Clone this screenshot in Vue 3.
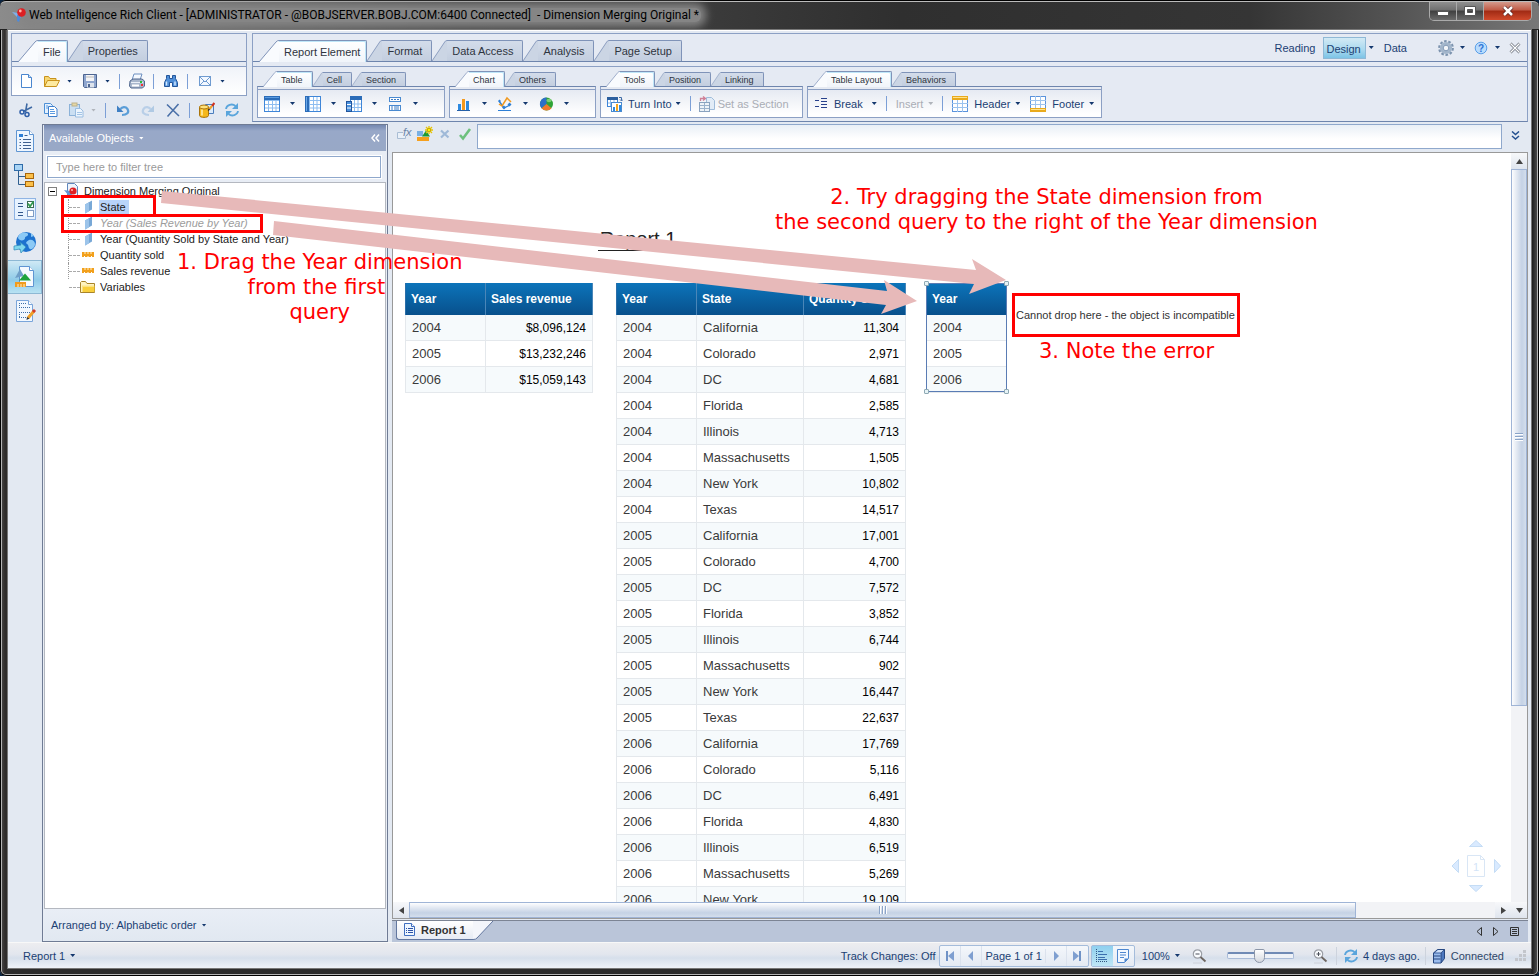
<script setup>
import { h } from 'vue'

const grid = (a) => `<rect x="0.5" y="0.5" width="15" height="15" fill="#fff" stroke="#3f86d8"/><path d="M4.5 1v14M8.5 1v14M12 1v14M1 4.5h14M1 8.5h14M1 12h14" stroke="#8dbdf0" fill="none"/>${a}`
const page = '<path d="M2.5 0.5h8l3 3v12h-11z" fill="#eef6ff" stroke="#4a86cf"/><path d="M10.5 0.5v3h3" fill="#fff" stroke="#4a86cf"/>'
const refresh = '<path d="M2 7c.5-4 6-6 9.500-3" fill="none" stroke="#5aa5dc" stroke-width="1.800"/><path d="M14 1v6H8z" fill="#5aa5dc"/><path d="M14 9c-.5 4-6 6-9.500 3" fill="none" stroke="#5aa5dc" stroke-width="1.800"/><path d="M2 15v-6h6z" fill="#5aa5dc"/>'

const icons = {
  logo: '<path d="M1 5l6 1 3 4-2 2-3-3z" fill="#7fb0ea"/><path d="M6 8l4 1-2 6-2-1z" fill="#4f8ad8"/><circle cx="10.500" cy="5.500" r="4.300" fill="#dc1f22"/><circle cx="9.300" cy="4" r="1.400" fill="#ffb0a8"/>',
  new: '<path d="M2.500 1.500h7l3 3v10h-10z" fill="#fff" stroke="#4a86cf"/><path d="M9.500 1.500v3h3" fill="#d4e6fa" stroke="#4a86cf"/>',
  open: '<path d="M.5 13.500v-10h4l1.500 2h6v2" fill="#f6d671" stroke="#c8921c"/><path d="M.5 13.500l3-6h12l-3 6z" fill="#fdeaa0" stroke="#c8921c"/>',
  save: '<path d="M1.500 1.500h13v13h-12l-1-1z" fill="#8fa6cf" stroke="#4d6591"/><rect x="4" y="2" width="8" height="6" fill="#f4f4f6"/><path d="M4 4h8" stroke="#bbb"/><rect x="5" y="10" width="7" height="4.500" fill="#dde3ec"/><rect x="6" y="11" width="2" height="3" fill="#4d6591"/>',
  print: '<path d="M5 1l8 0-2 6H3z" fill="#f5f9ff" stroke="#6c8fc0"/><path d="M1 8l3-2h9l2.500 2v5l-2 2H2l-1.500-2z" fill="#a9b7cc" stroke="#51678e"/><path d="M2 9.500h12" stroke="#e9eef6"/><rect x="3" y="11.500" width="7" height="2" fill="#fff"/><rect x="11" y="8" width="2" height="2" fill="#2bbd38"/><rect x="12" y="11" width="2" height="2" fill="#e33"/>',
  find: '<path d="M3.500 2.500h3v3h3v-3h3v3l2 4v4h-5v-4H6.500v4h-5v-4l2-4z" fill="#4f8fd8" stroke="#22559b"/><path d="M3.500 8.500v4M12 8.500v4" stroke="#cfe6ff" stroke-width="1.500"/>',
  mail: '<rect x="2.500" y="3.500" width="11" height="9" fill="#f3f8ff" stroke="#6f9bd0"/><path d="M3 4l5 5 5-5M3 12l4-4M13 12l-4-4" fill="none" stroke="#6f9bd0"/>',
  cut: '<path d="M9 1.500L7.500 10M14 5L5 9.500" stroke="#3f6aa5" stroke-width="1.600" fill="none"/><circle cx="4" cy="10" r="2" fill="none" stroke="#2f5fa8" stroke-width="1.500"/><circle cx="9" cy="12.500" r="2" fill="none" stroke="#2f5fa8" stroke-width="1.500"/>',
  copy: '<path d="M1.500 1.500h6l2 2v8h-8z" fill="#e4f1ff" stroke="#4d90d6"/><path d="M5.500 4.500h6l2.500 2.500v7.500h-8.500z" fill="#fff" stroke="#3f7ecb"/><path d="M7 7.500h4M7 9.500h5M7 11.500h5M3 4h2M3 6h2" stroke="#5b9ae0"/>',
  paste: '<rect x="1.500" y="2.500" width="10" height="11" fill="#cbdff2" stroke="#8cb2d8"/><rect x="4" y="1" width="5" height="3" fill="#e5d7a5" stroke="#bdb28a"/><path d="M7.500 6.500h5l2.500 2.500v6h-7.500z" fill="#edf5fd" stroke="#9bbde0"/><path d="M9 10.500h5M9 12.500h5" stroke="#a3c4e6"/>',
  undo: '<path d="M7 13c5 0 7.500-2.500 5.500-6C10.500 4.200 7 5 5.500 7" fill="none" stroke="#5b9ed8" stroke-width="2.200"/><path d="M2 3.500v6.500h6.500z" fill="#3f80c4"/>',
  redo: '<path d="M9 13c-5 0-7.500-2.500-5.500-6C5.500 4.200 9 5 10.500 7" fill="none" stroke="#b9cfe8" stroke-width="2.200"/><path d="M14 3.500v6.500H7.500z" fill="#b0cae4"/>',
  del: '<path d="M2 2.500l12 11.500M13.500 2L2.500 14.500" stroke="#4a70a8" stroke-width="1.600"/>',
  editdata: '<path d="M6.500 2.500h8v9h-8z" fill="#dcebfb" stroke="#4b7dbd"/><path d="M.5 5v8.500c0 2.500 9 2.500 9 0V5z" fill="#f5b81c" stroke="#a9730a"/><ellipse cx="5" cy="5" rx="4.500" ry="2" fill="#ffe27a" stroke="#a9730a"/><path d="M3 7.500v6" stroke="#fff2b5" stroke-width="1.500"/><path d="M15.500 1L13 4" stroke="#d0321e" stroke-width="2.200"/><path d="M13 4L10 7.500" stroke="#f0a028" stroke-width="2.200"/><path d="M10.500 7L9 8.500" stroke="#333" stroke-width="1.500"/>',
  refresh,
  tbl: grid('<rect x="0" y="0" width="16" height="4" fill="#2b6cb8"/><path d="M1 1.500h14" stroke="#5a9be0"/>'),
  tblv: grid('<rect x="0" y="0" width="4" height="16" fill="#2b6cb8"/><path d="M1.500 1v14" stroke="#6aa8e8"/>'),
  tblx: '<rect x="4.500" y=".5" width="11" height="15" fill="#fff" stroke="#3f86d8"/><path d="M8.500 4v11M12 4v11M5 8h10M5 11.500h10" stroke="#8dbdf0"/><rect x="4" y="0" width="12" height="4" fill="#2b6cb8"/><rect x=".5" y="5.500" width="5" height="10" fill="#4b92de" stroke="#22559b"/><path d="M1 8.500h4M1 12h4" stroke="#fff"/>',
  form: '<rect x="2.500" y="1.500" width="11" height="4" fill="#fff" stroke="#4a8ad0"/><rect x="2.500" y="9.500" width="11" height="5" fill="#fff" stroke="#4a8ad0"/><path d="M4 3.500h2M7 3.500h2M10 3.500h2M4 11h2M7 11h5M4 13h2M7 13h5" stroke="#3d7cc4"/>',
  bar: '<rect x="2" y="8" width="3" height="6" fill="#2d8ae0"/><rect x="6" y="3" width="3" height="11" fill="#f39a1f"/><rect x="10" y="5" width="3" height="9" fill="#2d8ae0"/><path d="M1 14.500h13" stroke="#2560a8"/>',
  line: '<path d="M2 5l5 7 6-3" fill="none" stroke="#2d7fd6" stroke-width="1.300"/><path d="M2 8l3 2 5-8 4 4" fill="none" stroke="#f0981e" stroke-width="1.500"/><path d="M1 14.500h13" stroke="#2d7fd6"/><path d="M7 9.500l2 2-2 2-2-2zM12.500 6.500l2 2-2 2-2-2zM2.500 3.500l1.500 1.500-1.500 1.500L1 5z" fill="#2d7fd6"/>',
  pie: '<circle cx="8.500" cy="8" r="6.500" fill="#2fa336"/><path d="M8.500 8V1.500A6.500 6.500 0 0 0 3.500 12.200z" fill="#2c6fc8"/><path d="M8.500 8L3.500 12.200A6.500 6.500 0 0 0 13.500 12.200z" fill="#f0792c"/><ellipse cx="11" cy="4.500" rx="2.500" ry="1.700" fill="#9de08f" opacity=".7"/>',
  turn: '<rect x=".5" y="1.500" width="10" height="9" fill="#fff" stroke="#3f86d8"/><rect x="0" y="1" width="11" height="3" fill="#2b5f9f"/><path d="M3.500 4v6M7 4v6M1 7h9" stroke="#8dbdf0"/><rect x="4.500" y="6.500" width="10" height="9" fill="#fff" stroke="#4a8ad0"/><path d="M12 1.500h2.500v3M13 3.500l1.500 1.500L16 3.500" fill="none" stroke="#3f6aa5"/><rect x="6" y="11" width="2" height="4" fill="#2d8ae0"/><rect x="9" y="8" width="2" height="7" fill="#f3a51f"/><rect x="12" y="9" width="2" height="6" fill="#2d8ae0"/>',
  setsec: '<path d="M7.500 1.500h5l3 3v9h-8z" fill="#e2ecf7" stroke="#9fbcda"/><rect x=".5" y="6.500" width="10" height="9" fill="#eef3f8" stroke="#8aa3bf"/><path d="M1 9.500h9M1 12.500h9M5.500 7v8" stroke="#9ab2cc"/><path d="M1.500 5V2.500h4M4 .5l2.500 2L4 4.500" fill="none" stroke="#cf7f96" stroke-width="1.300"/>',
  brk: '<path d="M1 4.500h4M1 10.500h4M7 2.500h6M7 5.500h6M7 8.500h6M7 11.500h6" stroke="#27408b"/>',
  header: '<rect x=".5" y=".5" width="15" height="15" fill="#fff" stroke="#5b93dc"/><path d="M5.500 4v12M10.500 4v12M0 7.500h16M0 11.500h16" stroke="#9cc3ee"/><rect x="0" y="0" width="16" height="4" fill="#e9aa1c"/><path d="M1 1.500h14" stroke="#ffe28a"/>',
  footer: '<rect x=".5" y=".5" width="15" height="15" fill="#fff" stroke="#5b93dc"/><path d="M5.500 0v12M10.500 0v12M0 4.500h16M0 8.500h16" stroke="#9cc3ee"/><rect x="0" y="12" width="16" height="4" fill="#e9aa1c"/><path d="M1 13.500h14" stroke="#ffe28a"/>',
  gear: '<circle cx="8" cy="8" r="6.800" fill="none" stroke="#7c93ae" stroke-width="2.200" stroke-dasharray="2.600 1.670"/><circle cx="8" cy="8" r="4.600" fill="#e4ebf3" stroke="#a3b6cb" stroke-width="3"/><circle cx="8" cy="8" r="2.800" fill="#f2f5f9" stroke="#7f97b4"/>',
  help: '<circle cx="8" cy="8" r="5.800" fill="#b9dcfd" stroke="#5a9fe8"/><text x="8" y="12" text-anchor="middle" font-size="10" font-weight="bold" fill="#2f74d4">?</text>',
  close: '<path d="M3.500 3.500l9 9M12.500 3.500l-9 9" stroke="#5d6470" stroke-width="2.600"/><path d="M3.500 3.500l9 9M12.500 3.500l-9 9" stroke="#fff" stroke-width="1.400"/>',
  fx: '<path d="M6 6.500H.5v6h8V10" fill="#e9f0f8" stroke="#a9bdd4"/><text x="6" y="10" font-size="11" font-style="italic" fill="#6883a8">fx</text>',
  shape: '<rect x="0" y="5" width="6" height="5" fill="#79b0e4"/><path d="M5 10.500l4-6 4 6z" fill="#1c9a35"/><rect x="0" y="11" width="12" height="4" fill="#f6a01e"/><path d="M12 0v8M8 4h8M9 1l6 6M15 1L9 7" stroke="#e8c400" stroke-width="1.300"/><circle cx="12" cy="4" r="1.700" fill="#fff200" stroke="#b08a00" stroke-width=".6"/>',
  x: '<path d="M4 4.500l7.500 7M11.500 4.500l-7.500 7" stroke="#9fb9d8" stroke-width="2.200"/>',
  check: '<path d="M3 9l3 3.500L13 3" fill="none" stroke="#6dc07d" stroke-width="2.600"/>',
  db: '<path d="M2.500 5l4-3.500h7v9L10 15H2.500z" fill="#4c78bf" stroke="#27477f"/><path d="M2.500 5h7.500l3.500-3.500M10 5v10" fill="none" stroke="#27477f"/><path d="M3 5.500h6.500v9H3z" fill="#9bbcec"/><path d="M3 8h6.500M3 11h6.500" stroke="#27477f"/><path d="M4 4.500l3-2.500h5.500L10 4.500z" fill="#cfe0f8"/>',
  zout: '<circle cx="6.500" cy="6" r="4.200" fill="#fafcff" stroke="#9b9fa6" stroke-width="1.200"/><path d="M4.500 6h4" stroke="#4a4f58"/><path d="M9.500 9l5 4.500" stroke="#6d6560" stroke-width="1.800"/><path d="M2 15h9" stroke="#ccd0d8"/>',
  zin: '<circle cx="6.500" cy="6" r="4.200" fill="#fafcff" stroke="#9b9fa6" stroke-width="1.200"/><path d="M4.500 6h4M6.500 4v4" stroke="#4a4f58"/><path d="M9.500 9l5 4.500" stroke="#6d6560" stroke-width="1.800"/><path d="M2 15h9" stroke="#ccd0d8"/>',
  doc: '<path d="M3.500 1.500h7l3 3v9h-10z" fill="#eef6ff" stroke="#3f6fc0"/><path d="M10.500 1.500v3h3" fill="#fff" stroke="#3f6fc0"/><path d="M5 6.500h1M7 6.500h5M5 8.500h1M7 8.500h5M5 10.500h1M7 10.500h5" stroke="#2c52a5"/>',
  cube: '<path d="M5 5.500l7-4v9l-7 4z" fill="#78a8d6"/><path d="M5 5.500l4-2.300v9l-4 2.300z" fill="#9cc4ea"/>',
  measure: '<path d="M2 5h12v5h-2V9h-1v1H8.500V9h-1v1H5V9H4v1H2z" fill="#f2a01c"/><path d="M5 5v2M8 5v2M11 5v2" stroke="#fff0c8"/>',
  folder: '<path d="M.5 13.500v-10l1-1h4l1.500 2h7.500v9z" fill="#fff3c0" stroke="#a8842a"/><path d="M2.500 13V6.500h12v6.500z" fill="#f9cf3c"/><path d="M3 7h11" stroke="#fff6c8"/>',
  root: '<path d="M3.500.5h7l3 3v9h-10z" fill="#eef4fc" stroke="#5f86bd"/><path d="M0 7l6 1 2 4-3 1z" fill="#5f95d6"/><circle cx="9" cy="8" r="3.600" fill="#dd2024"/><circle cx="8" cy="7" r="1.100" fill="#ffb0a8"/><path d="M6 14.500h7" stroke="#9ab0cc"/>',
}

const rail = [
  { label: 'Document Summary', art: '<path d="M3.500 1.500h13l4 4v17h-17z" fill="#eef6ff" stroke="#5f95d2"/><path d="M16.500 1.500v4h4" fill="#fff" stroke="#5f95d2"/><rect x="6" y="5" width="4" height="3" fill="#2d7fd6"/><path d="M11.500 6.500h3M10 10.500h8M10 13.500h8M10 16.500h8M10 19.500h8M6.500 10.500h1.500M6.500 13.500h1.500M6.500 16.500h1.500M6.500 19.500h1.500" stroke="#40618f"/>' },
  { label: 'Navigation Map', art: '<path d="M5.500 8v13.500h8M5.500 13.500h8" fill="none" stroke="#2f5f90"/><rect x="1.500" y="1.500" width="8" height="6" fill="#a9d4f5" stroke="#2f6ba8"/><rect x="12.500" y="10.500" width="8" height="5" fill="#fbc04a" stroke="#a8660b"/><rect x="12.500" y="18.500" width="8" height="5" fill="#fbc04a" stroke="#a8660b"/>' },
  { label: 'Input Controls', art: '<rect x="1.500" y="1.500" width="21" height="21" fill="#e6f2ff" stroke="#8fb4e4"/><path d="M5 6.500h5M5 9.500h5M5 15.500h5M5 18.500h5" stroke="#31568a"/><rect x="14.500" y="4.500" width="6" height="6" fill="#fff" stroke="#3c6a55"/><path d="M15 6.500l2 3 3.500-5" fill="none" stroke="#2f9a4d" stroke-width="1.800"/><rect x="14.500" y="13.500" width="6" height="6" fill="#fff" stroke="#7f9cc4"/>' },
  { label: 'Web Service Publisher', art: '<circle cx="13" cy="11" r="10" fill="#1d72cf"/><path d="M7 3c4-3 9-1 8 1s-3 1-3 3-3 3-5 2-3-3 0-6zM16 9c3-1 6 1 6 4s-3 6-5 5-1-4-3-5 0-3 2-4zM18 2l3 3-3 1z" fill="#8ccaf6"/><path d="M1 15l7-1-1-3 6 5-5 6-1-4-6 1z" fill="#7fd7ee" stroke="#2c87b8" stroke-width=".7"/>' },
  { label: 'Available Objects', on: true, art: '<path d="M6.500 1.500h10l4 4v16h-14z" fill="#f5faff" stroke="#5f95d2"/><path d="M16.500 1.500v4h4" fill="#fff" stroke="#5f95d2"/><path d="M2 13L7 4l4 7z" fill="#6f9fc8"/><path d="M6 15.500l6-7 6 7z" fill="#1ea33c"/><rect x="2" y="17" width="11" height="5" fill="#f09c1e"/><path d="M5 19v3M8 19v3M11 19v3" stroke="#fff0c8"/>' },
  { label: 'Document Structure', art: '<path d="M3.500 1.500h12l4 4v17h-16z" fill="#f2f8ff" stroke="#7aa5da"/><path d="M15.500 1.500v4h4" fill="#fff" stroke="#7aa5da"/><path d="M6 4.500h8M6 8.500h11M6 13.500h11M6 18.500h8M6.500 4v5M6.500 13v6" stroke="#3c6da8" stroke-dasharray="1 1"/><path d="M21 12l-6 7" stroke="#f0a028" stroke-width="3"/><path d="M22 11l-2 2" stroke="#d23a2a" stroke-width="3"/><path d="M14 18l-.5 3 3-1.500z" fill="#333"/>' },
]

const Ico = (p) => h('svg', { viewBox: '0 0 16 16', width: 16, height: 16, 'aria-hidden': 'true', innerHTML: icons[p.n] })
Ico.props = ['n']

const leftTabs = ['File', 'Properties']
const mainTabs = ['Report Element', 'Format', 'Data Access', 'Analysis', 'Page Setup']

const fileRow = [['new'], ['open', 1], ['save', 1], '|', ['print'], '|', ['find'], '|', ['mail', 1]]
const editRow = [['cut'], ['copy'], ['paste', 2], '|', ['undo'], ['redo'], ['del'], '|', ['editdata'], ['refresh']]

const groups = [
  { cls: 'g1', tabs: ['Table', 'Cell', 'Section'], icons: ['tbl', 'tblv', 'tblx', 'form'] },
  { cls: 'g2', tabs: ['Chart', 'Others'], icons: ['bar', 'line', 'pie'] },
  { cls: 'g3', tabs: ['Tools', 'Position', 'Linking'], cmds: [{ i: 'turn', t: 'Turn Into', c: 1 }, '|', { i: 'setsec', t: 'Set as Section', off: true }] },
  { cls: 'g4', tabs: ['Table Layout', 'Behaviors'], cmds: [{ i: 'brk', t: 'Break', c: 2 }, '|', { t: 'Insert', c: 1, off: true }, '|', { i: 'header', t: 'Header', c: 1 }, { i: 'footer', t: 'Footer', c: 1 }] },
]

const tree = [
  { i: 'cube', t: 'State', sel: true },
  { i: 'cube', t: 'Year (Sales Revenue by Year)', dim: true },
  { i: 'cube', t: 'Year (Quantity Sold by State and Year)' },
  { i: 'measure', t: 'Quantity sold' },
  { i: 'measure', t: 'Sales revenue' },
  { i: 'folder', t: 'Variables' },
]

const revenue = [['2004', '$8,096,124'], ['2005', '$13,232,246'], ['2006', '$15,059,143']]
const states = ['California', 'Colorado', 'DC', 'Florida', 'Illinois', 'Massachusetts', 'New York', 'Texas']
const sold = {
  2004: ['11,304', '2,971', '4,681', '2,585', '4,713', '1,505', '10,802', '14,517'],
  2005: ['17,001', '4,700', '7,572', '3,852', '6,744', '902', '16,447', '22,637'],
  2006: ['17,769', '5,116', '6,491', '4,830', '6,519', '5,269', '19,109'],
}
const quantity = Object.entries(sold).flatMap(([y, list]) => list.map((q, i) => [y, states[i], q]))
</script>

<template>
  <div class="window">
    <header class="titlebar">
      <Ico n="logo" class="logo" />
      <span class="title">Web Intelligence Rich Client - [ADMINISTRATOR - @BOBJSERVER.BOBJ.COM:6400 Connected]&nbsp; - Dimension Merging Original *</span>
      <div class="winbtns">
        <button aria-label="Minimize"><svg width="12" height="10"><rect x=".5" y="5.500" width="11" height="4" fill="#fff" stroke="#555" /></svg></button>
        <button aria-label="Maximize"><svg width="12" height="10"><path d="M.5.5h11v9H.5zM3.500 3.500v3h5v-3z" fill="#fff" fill-rule="evenodd" stroke="#555" /></svg></button>
        <button class="x" aria-label="Close"><svg width="12" height="10"><path d="M2 1l8 8M10 1L2 9" stroke="#552020" stroke-width="4" /><path d="M2 1l8 8M10 1L2 9" stroke="#fff" stroke-width="2.500" /></svg></button>
      </div>
    </header>

    <div class="client">
      <div class="ribbon">
        <div class="filecol">
          <section class="panel">
            <div class="tabrow">
              <button v-for="(t, i) in leftTabs" :key="t" class="tab" :class="{ on: !i }">
                <svg class="slant" viewBox="0 0 20 22" preserveAspectRatio="none"><path class="f" d="M0 22L17 2Q18 .5 20 .5V22z" /><path class="s" d="M0 22L17 2Q18 .5 20 .5" /></svg>
                <span>{{ t }}</span>
              </button>
            </div>
            <div class="strip"></div>
            <div class="tools">
              <template v-for="(t, i) in fileRow" :key="i">
                <i v-if="t === '|'" class="sep"></i>
                <template v-else><button class="ib" :aria-label="t[0]"><Ico :n="t[0]" /></button><button v-if="t[1]" class="caret near" aria-label="More"></button></template>
              </template>
            </div>
          </section>
          <div class="tools plain">
            <template v-for="(t, i) in editRow" :key="i">
              <i v-if="t === '|'" class="sep"></i>
              <template v-else><button class="ib" :aria-label="t[0]"><Ico :n="t[0]" /></button><button v-if="t[1]" class="caret near off" aria-label="More"></button></template>
            </template>
          </div>
        </div>

        <section class="panel main">
          <div class="tabrow">
            <button v-for="(t, i) in mainTabs" :key="t" class="tab" :class="{ on: !i }">
              <svg class="slant" viewBox="0 0 20 22" preserveAspectRatio="none"><path class="f" d="M0 22L17 2Q18 .5 20 .5V22z" /><path class="s" d="M0 22L17 2Q18 .5 20 .5" /></svg>
              <span>{{ t }}</span>
            </button>
            <nav class="modes">
              <button>Reading</button>
              <button class="design">Design</button>
              <button class="caret" aria-label="Design options"></button>
              <button class="data">Data</button>
              <button class="ib" aria-label="Settings"><Ico n="gear" /></button>
              <button class="caret" aria-label="Settings menu"></button>
              <button class="ib" aria-label="Help"><Ico n="help" /></button>
              <button class="caret" aria-label="Help menu"></button>
              <button class="ib" aria-label="Close"><Ico n="close" /></button>
            </nav>
          </div>
          <div class="strip"></div>
          <div class="groups">
            <div v-for="g in groups" :key="g.cls" class="group" :class="g.cls">
              <div class="gtabs">
                <button v-for="(t, i) in g.tabs" :key="t" class="tab small" :class="{ on: !i }">
                  <svg class="slant" viewBox="0 0 20 22" preserveAspectRatio="none"><path class="f" d="M0 22L17 2Q18 .5 20 .5V22z" /><path class="s" d="M0 22L17 2Q18 .5 20 .5" /></svg>
                  <span>{{ t }}</span>
                </button>
              </div>
              <div class="gbody">
                <template v-if="g.icons">
                  <template v-for="n in g.icons" :key="n"><button class="ib" :aria-label="n"><Ico :n="n" /></button><button class="caret" aria-label="More"></button></template>
                </template>
                <template v-else v-for="(c, i) in g.cmds" :key="i">
                  <i v-if="c === '|'" class="sep"></i>
                  <button v-else class="cmd" :class="{ off: c.off, wide: c.c === 2 }"><Ico v-if="c.i" :n="c.i" /><span>{{ c.t }}</span><i v-if="c.c" class="caret"></i></button>
                </template>
              </div>
            </div>
          </div>
        </section>
      </div>

      <div class="work">
        <nav class="rail">
          <button v-for="r in rail" :key="r.label" :class="{ on: r.on }" :aria-label="r.label"><svg viewBox="0 0 24 24" width="24" height="24" v-html="r.art"></svg></button>
        </nav>

        <aside class="side">
          <div class="sidehead"><button>Available Objects<i class="caret light"></i></button>
            <button aria-label="Collapse"><svg width="9" height="8"><path d="M4 .5L1 4l3 3.500M8 .5L5 4l3 3.500" fill="none" stroke="#fff" stroke-width="1.500" /></svg></button></div>
          <div class="filter"><input type="text" placeholder="Type here to filter tree" aria-label="Filter tree" /></div>
          <div class="tree">
            <div class="node rootnode"><svg width="9" height="9" class="toggle"><rect x=".5" y=".5" width="8" height="8" fill="#fff" stroke="#808080" /><path d="M2 4.500h5" stroke="#000" /></svg><Ico n="root" /><span>Dimension Merging Original</span></div>
            <div class="kids">
              <div v-for="n in tree" :key="n.t" class="node"><i class="dash"></i><Ico :n="n.i" /><span :class="{ sel: n.sel, dim: n.dim }">{{ n.t }}</span></div>
            </div>
          </div>
          <div class="sidefoot"><button>Arranged by: Alphabetic order<i class="caret"></i></button></div>
        </aside>

        <main class="report">
          <div class="formula">
            <button class="ib" aria-label="Formula editor"><Ico n="fx" /></button>
            <button class="ib" aria-label="Create variable"><Ico n="shape" /></button>
            <button class="ib" aria-label="Cancel"><Ico n="x" /></button>
            <button class="ib" aria-label="Validate"><Ico n="check" /></button>
            <input type="text" aria-label="Formula" />
            <button class="more" aria-label="Expand"><svg width="9" height="9"><path d="M1 .5L4.500 3.500 8 .5M1 5l3.500 3L8 5" fill="none" stroke="#24508f" stroke-width="1.500" /></svg></button>
          </div>
          <div class="view">
            <div class="canvas">
              <h1>Report 1</h1>
              <div class="tables">
                <table>
                  <thead><tr><th class="c1">Year</th><th class="c2">Sales revenue</th></tr></thead>
                  <tbody><tr v-for="r in revenue" :key="r[0]"><td>{{ r[0] }}</td><td class="num">{{ r[1] }}</td></tr></tbody>
                </table>
                <table>
                  <thead><tr><th class="c1">Year</th><th class="c2">State</th><th class="c3">Quantity sold</th></tr></thead>
                  <tbody><tr v-for="r in quantity" :key="r[0] + r[1]"><td>{{ r[0] }}</td><td>{{ r[1] }}</td><td class="num">{{ r[2] }}</td></tr></tbody>
                </table>
                <div class="picked">
                  <table>
                    <thead><tr><th class="c1">Year</th></tr></thead>
                    <tbody><tr v-for="r in revenue" :key="r[0]"><td>{{ r[0] }}</td></tr></tbody>
                  </table>
                  <i class="h tl"></i><i class="h tr"></i><i class="h bl"></i><i class="h br"></i>
                </div>
              </div>
              <svg class="hint" width="52" height="54" viewBox="0 0 52 54">
                <g fill="#d9eaff" stroke="#c4dcf5"><path d="M19.500 7.500L26 1.500l6.500 6zM19.500 46.500l6.500 6 6.500-6zM8.500 20.500L2 27l6.500 6.500zM44.500 20.500L50.500 27l-6 6.500z" /></g>
                <path d="M17.500 16.500h13l4 4v17h-17z" fill="#fff" stroke="#d9e6f5" /><path d="M30.500 16.500v4h4" fill="none" stroke="#d9e6f5" /><text x="26" y="32" text-anchor="middle" font-size="11" fill="#d3e4f7">1</text>
              </svg>
            </div>
            <div class="vbar">
              <button class="ar" aria-label="Scroll up"><svg width="7" height="5"><path d="M0 5l3.500-5L7 5z" fill="#444" /></svg></button>
              <div class="vthumb"><i></i><i></i><i></i></div><div class="vrest"></div>
            </div>
            <div class="hbar">
              <button class="ar" aria-label="Scroll left"><svg width="5" height="7"><path d="M5 0v7L0 3.500z" fill="#444" /></svg></button>
              <div class="hthumb"><i></i><i></i><i></i></div><div class="hrest"></div>
              <button class="ar" aria-label="Scroll right"><svg width="5" height="7"><path d="M0 0v7l5-3.500z" fill="#444" /></svg></button>
            </div>
            <button class="ar" aria-label="Scroll down"><svg width="7" height="5"><path d="M0 0l3.500 5L7 0z" fill="#444" /></svg></button>
          </div>
          <div class="sheets">
            <button class="sheet"><Ico n="doc" /><span>Report 1</span></button>
            <svg class="end" width="20" height="20"><path d="M0 0h20L4 17Q3 18.500 0 18.500z" fill="#f4f6fb" /><path d="M20 0L4 17Q3 18.500 0 18.500" fill="none" stroke="#62779f" /></svg>
            <div class="sheetnav">
              <button aria-label="Previous report"><svg width="6" height="9"><path d="M5.500.5v8L1 4.500z" fill="none" stroke="#333" /></svg></button>
              <button aria-label="Next report"><svg width="6" height="9"><path d="M.5.5v8L5 4.500z" fill="none" stroke="#333" /></svg></button>
              <button aria-label="Report list"><svg width="9" height="9"><path d="M.5.5h8v8h-8zM2 2.500h5M2 4.500h5M2 6.500h5" fill="none" stroke="#333" /></svg></button>
            </div>
          </div>
        </main>
      </div>

      <footer class="status">
        <button class="cur">Report 1<i class="caret"></i></button>
        <span class="track">Track Changes: Off</span>
        <div class="pager">
          <button aria-label="First page"><svg width="8" height="10"><path d="M1 0v10" stroke="#6f92c6" stroke-width="2" /><path d="M8 0v10L2 5z" fill="#7f9fd0" /></svg></button>
          <button aria-label="Previous page"><svg width="8" height="10"><path d="M6 0v10L1 5z" fill="#7f9fd0" /></svg></button>
          <span>Page 1 of 1</span>
          <button aria-label="Next page"><svg width="8" height="10"><path d="M2 0v10l5-5z" fill="#7f9fd0" /></svg></button>
          <button aria-label="Last page"><svg width="8" height="10"><path d="M7 0v10" stroke="#6f92c6" stroke-width="2" /><path d="M0 0v10l6-5z" fill="#7f9fd0" /></svg></button>
        </div>
        <div class="views">
          <button class="on" aria-label="Quick display mode"><svg width="14" height="14"><path d="M3 2.500h5M3 5.500h9M3 8.500h7" stroke="#3b6fae" /><path d="M1.500 0v13M1 12.500h12" stroke="#33557f" stroke-dasharray="1 1" /><path d="M3 10.500h9" stroke="#3b6fae" /></svg></button>
          <button aria-label="Page mode"><svg width="14" height="14"><path d="M1.500.5h11v9l-4 4h-7z" fill="#f3f8ff" stroke="#4d86cf" /><path d="M4 3.500h6M4 6h6M4 8.500h4" stroke="#4d86cf" /><path d="M8.500 13.500v-4h4z" fill="#4d86cf" /></svg></button>
        </div>
        <button class="zoom">100%<i class="caret"></i></button>
        <button class="ib" aria-label="Zoom out"><Ico n="zout" /></button>
        <input class="slider" type="range" min="0" max="100" value="48" aria-label="Zoom" />
        <button class="ib" aria-label="Zoom in"><Ico n="zin" /></button>
        <i class="bar"></i>
        <button class="ago"><Ico n="refresh" /><span>4 days ago.</span></button>
        <i class="bar"></i>
        <span class="conn"><Ico n="db" /><span>Connected</span></span>
        <svg class="grip" width="11" height="11"><path d="M8 0h3v3H8zM8 4h3v3H8zM8 8h3v3H8zM4 4h3v3H4zM4 8h3v3H4zM0 8h3v3H0z" fill="#c3c6cc" /></svg>
      </footer>
    </div>

    <svg class="arrows" width="1020" height="330" viewBox="0 0 1020 330" aria-hidden="true">
      <path d="M162 191L976 270 972 259 1006 280 969 294 974 284 161 203zM274 221L887 291 884 280 917 301 881 314 886 305 273 235z" fill="#e7b9b9" />
    </svg>
    <div class="mark m1"></div>
    <div class="mark m2"></div>
    <div class="mark m3">Cannot drop here - the object is incompatible</div>
    <p class="note n1">1. Drag the Year dimension<br />from the first&nbsp;<br />query</p>
    <p class="note n2">2. Try dragging the State dimension from<br />the second query to the right of the Year dimension</p>
    <p class="note n3">3. Note the error</p>
  </div>
</template>

<style>
html, body { margin: 0; height: 100%; background: #0b2440; }
#app { height: 100%; }
</style>

<style scoped>
* { box-sizing: border-box; }
.window {
  position: relative; display: flex; flex-direction: column; height: 100%; padding: 0 8px 8px; overflow: hidden;
  font: 11px/14px "Liberation Sans", Arial, sans-serif; color: #333;
  background: linear-gradient(to right, #555 0, #2f2c2b 5px, transparent 8px, transparent calc(100% - 8px), #1c1c1c calc(100% - 7px), #4a4a4a calc(100% - 2px), #ccc 100%), linear-gradient(#8d8d8d 0, #817a76 200px, #5c5552 262px, #2c2c2c 270px);
  border-radius: 6px; box-shadow: inset 0 0 0 1px #000, inset 0 0 0 2px #b5b5b5;
}
button { font: inherit; color: #1c3f73; background: none; border: 0; padding: 0; display: flex; align-items: center; white-space: nowrap; }
svg { display: block; flex: none; }
.titlebar {
  flex: none; display: flex; align-items: center; height: 30px; margin: 0 -8px; padding-left: 11px; border-bottom: 1px solid #222; border-top: 1px solid #000;
  background: linear-gradient(to right, #8b8b8b 0, #6b6b6b 240px, #484848 460px, #3a3a3a 720px, #2f2f2f 900px, #353535 1250px, #555 1400px, #777 100%);
  border-radius: 6px 6px 0 0; box-shadow: inset 0 2px 0 -1px #bbb;
}
.logo { position: relative; z-index: 1; }
.title {
  padding: 0 2px; font: 12px/14px Roboto, "Open Sans", sans-serif; color: #000; white-space: nowrap;
  background: #858585; box-shadow: 0 0 8px 5px #858585; border-radius: 6px;
}
.winbtns { display: flex; align-self: flex-start; margin: 1px 7px 0 auto; border: 1px solid #aaa; border-top: 0; border-radius: 0 0 5px 5px; overflow: hidden; }
.winbtns button { width: 27px; height: 18px; justify-content: center; background: linear-gradient(#8f8f8f, #6f6f6f 45%, #3f3f3f 50%, #6a6a6a); border-right: 1px solid #aaa; }
.winbtns .x { width: 47px; border: 0; background: linear-gradient(#d49a8c, #c05a45 45%, #a02a14 50%, #d04a2c); }
.client { flex: 1; min-height: 0; display: flex; flex-direction: column; background: #e3e9f2; border-top: 1px solid #fff; outline: 1px solid #777; }

.ribbon { flex: none; display: grid; grid-template-columns: 236px 1fr; gap: 5px; padding: 2px 3px 2px; }
.panel { border: 1px solid #8ca0c4; background: #e5eaf3; }
.panel.main { border-bottom-color: #6e85ad; }
.tabrow { display: flex; align-items: flex-end; height: 28px; padding-left: 6px; border-bottom: 1px solid #6e85ad; }
.strip { height: 5px; background: #e5eaf3; border-bottom: 1px solid #8ca0c4; }
.tab { height: 21px; font-size: 11px; color: #2e3440; align-items: stretch; }
.tab .slant { width: 15px; height: 100%; }
.tab span { display: flex; align-items: center; padding: 0 9px 0 5px; border-top: 1px solid #7f93b8; border-right: 1px solid #7f93b8; border-radius: 0 2px 0 0; background: linear-gradient(#d3dcea, #c3cedf); }
.tab .f { fill: #cbd5e4; }
.tab .s { fill: none; stroke: #7f93b8; stroke-width: 1; }
.tab.on { position: relative; height: 22px; margin-bottom: -1px; }
.tab.on .slant { width: 20px; }
.tab.on span { padding-right: 6px; background: linear-gradient(#fff, #f0f4fa); box-shadow: inset -1px 1px 0 #bfe6f8; }
.tab.on .f { fill: #f9fbfe; }
.tab.small { height: 14px; font-size: 9px; }
.tab.small .slant { width: 10px; }
.tab.small span { padding: 0 9px 0 4px; }
.tab.small.on { height: 16px; margin-bottom: -1px; }
.tab.small.on .slant { width: 14px; }
.tools { display: flex; align-items: center; gap: 9px; height: 28px; padding: 0 7px; background: linear-gradient(#f0f3f9, #fff); }
.tools.plain { background: none; height: 26px; padding-top: 2px; }
.ib { width: 16px; height: 16px; justify-content: center; }
.sep { flex: none; width: 1px; height: 15px; background: #7c9fd6; margin-left: -1px; }
.caret { flex: none; width: 5px; height: 3px; margin: 0 1px; padding: 0; background: #14386e; clip-path: polygon(0 0, 100% 0, 50% 100%); }
.caret.near { margin-left: -2px; }
.caret.light { background: #fff; }
.plain .caret.off, .off .caret { background: #b0b4bb; }

.modes { display: flex; align-items: center; align-self: center; margin: 0 4px 0 auto; }
.modes .design { height: 22px; margin: 0 2px 0 7px; padding: 2px 4px 0 3px; border: 1px solid #8fb9d6; background: linear-gradient(#d3eaf5, #a8d8ee 60%, #7cc4e6); }
.modes .data { margin: 0 31px 0 9px; }
.modes .ib { margin: 0 5px 0 7px; }
.modes .data + .ib { margin-left: 0; }
.modes .ib:last-child { margin: 0 0 0 6px; }
.groups { display: flex; gap: 4px; padding: 4px 4px 3px; }
.gtabs { display: flex; align-items: flex-end; height: 15px; padding-left: 6px; }
.gbody { display: flex; align-items: center; gap: 9px; height: 32px; border: 1px solid #8ca0c4; border-top-color: #6e85ad; background: linear-gradient(#e6eaf2 2px, #8ca0c4 2px, #8ca0c4 3px, #e6eaf2 3px, #fff 90%); padding: 3px 5px 0 6px; }
.g1 { width: 188px; }
.g2 { width: 147px; }
.g3 { width: 203px; }
.g4 { width: 295px; }
.g3 .gbody { gap: 8px; }
.g3 .gbody .sep { margin-left: 0; }
.cmd { gap: 3px; }
.g4 .cmd { gap: 4px; }
.g4 .sep ~ .cmd svg { margin-right: 2px; }
.cmd.wide .caret { margin-left: 5px; }
.cmd.off { color: #a9adb5; }
.g3 .cmd:first-child span { padding-left: 2px; }

.work { flex: 1; min-height: 0; display: grid; grid-template-columns: 34px 346px 1fr; }
.rail button { width: 34px; height: 34px; justify-content: center; }
.rail .on { border: 1px solid #8db8d4; border-left: 0; background: linear-gradient(#cfe9f5, #8fcbe8 60%, #b8e2f3); }
.side { display: flex; flex-direction: column; min-height: 0; border: 1px solid #6f7b94; background: #e8edf5; padding: 0 1px; }
.sidehead { flex: none; display: flex; align-items: center; justify-content: space-between; height: 26px; padding: 0 6px 0 5px; background: linear-gradient(#7488b0, #98a8c8 6px, #98a8c6); }
.sidehead button { color: #fff; gap: 4px; }
.filter { flex: none; padding: 5px 5px 4px 3px; height: 31px; }
.filter input { display: block; width: 100%; height: 22px; border: 1px solid #8fa8cc; outline: 1px solid #fff; padding: 0 8px; font: inherit; color: #333; background: #fff; }
.filter input::placeholder { color: #9a9a9a; opacity: 1; }
.tree { flex: 1; min-height: 0; background: #fff; border: 1px solid #b4b8c0; overflow: hidden; }
.node { display: flex; align-items: center; height: 16px; }
.node span { white-space: nowrap; color: #222; }
.rootnode { padding-left: 3px; }
.rootnode .toggle { margin-right: 7px; }
.rootnode span { margin-left: 4px; }
.kids { margin-left: 23px; }
.kids .node { border-left: 1px dotted #999; }
.kids .node:last-child { border-left-color: transparent; }
.kids .node span { margin-left: 3px; padding: 0 1px; }
.kids .node span.sel { background: #b9d4fa; padding-right: 3px; }
.kids .node span.dim { color: #9c9c9c; font-style: italic; }
.dash { width: 11px; border-top: 1px dashed #aaa; }
.sidefoot { flex: none; height: 32px; display: flex; align-items: center; padding-left: 7px; background: linear-gradient(#e9eef6, #e1e8f1); }
.sidefoot button, .cur, .zoom { gap: 4px; }

.report { display: flex; flex-direction: column; min-width: 0; min-height: 0; padding: 0 3px 0 4px; }
.formula { flex: none; display: flex; align-items: center; height: 28px; padding-left: 5px; }
.formula .ib { margin-right: 4px; margin-top: -8px; }
.formula input { flex: 1; min-width: 0; height: 25px; margin: 0 0 3px; border: 1px solid #8fa8cc; background: linear-gradient(#e9eff6, #fff 60%); font: inherit; }
.formula .more { margin: -6px 8px 0 9px; }
.view { flex: 1; min-height: 0; display: grid; grid-template: minmax(0, 1fr) 16px / minmax(0, 1fr) 16px; border: 1px solid #999; background: #fff; }
.canvas { position: relative; overflow: hidden; padding: 74px 12px 0; background: #fff; }
h1 { width: 80px; height: 24px; margin: 0 0 32px 193px; font: 20px/24px "Liberation Sans", Arial, sans-serif; text-align: center; white-space: nowrap; color: #222; border-bottom: 1px solid #222; }
.tables { display: flex; align-items: flex-start; }
table { border-collapse: separate; border-spacing: 0; flex: none; margin-right: 23px; table-layout: fixed; }
th { height: 32px; padding: 0 5px; text-align: left; font: bold 12px/16px "Liberation Sans", Arial, sans-serif; color: #fff; background: linear-gradient(#0c74ba, #08508c); border-right: 1px solid #4a86b8; }
td { height: 26px; padding: 0 6px; font: 13px/16px "Liberation Sans", Arial, sans-serif; color: #3a3a3a; border-right: 1px solid #e4e8ec; border-bottom: 1px solid #e4e8ec; }
th:first-child { border-left: 1px solid #2a6ea8; }
td:first-child { border-left: 1px solid #e4e8ec; }
tr:nth-child(odd) td { background: #f6fafc; }
td.num { text-align: right; font-size: 12px; color: #000; }
.c1 { width: 81px; }
.c2 { width: 107px; }
.c3 { width: 102px; }
table + table { margin-right: 20px; }
.picked { position: relative; height: 109px; }
.picked table { margin: 0; }
.picked::after { content: ""; position: absolute; inset: 0; border: 1px solid #5a7cb4; }
.h { position: absolute; z-index: 1; width: 5px; height: 5px; background: #e6f3f6; border: 1px solid #8fa9b4; border-radius: 1px; }
.tl { left: -2px; top: -2px; } .tr { right: -2px; top: -2px; } .bl { left: -2px; bottom: -2px; } .br { right: -2px; bottom: -2px; }
.hint { position: absolute; right: 9px; bottom: 9px; }
.vbar { display: flex; flex-direction: column; background: #f2f3f6; }
.hbar { display: flex; background: #f2f3f6; }
.ar { flex: none; width: 16px; height: 16px; justify-content: center; background: linear-gradient(#f7f8fa, #dfe5ee); }
.vthumb { flex: 536; border: 1px solid #9fb4d6; background: linear-gradient(to right, #fdfdfe, #c5d2e5 70%, #d3deec); display: flex; flex-direction: column; align-items: center; justify-content: center; gap: 1px; }
.vthumb i { width: 8px; height: 2px; background: #8ba4c8; border-bottom: 1px solid #fff; }
.vrest { flex: 197; }
.hthumb { flex: 946; border: 1px solid #9fb4d6; background: linear-gradient(#fdfdfe, #c5d2e5 70%, #d3deec); display: flex; align-items: center; justify-content: center; gap: 1px; }
.hthumb i { width: 2px; height: 8px; background: #8ba4c8; border-right: 1px solid #fff; }
.hrest { flex: 139; }
.sheets { flex: none; display: flex; height: 22px; margin-top: 1px; padding-left: 4px; border-top: 1px solid #7c8494; background: #bac5d9; }
.sheet { height: 19px; gap: 4px; padding: 0 7px 0 4px; border: 1px solid #62779f; border-width: 0 0 1px 1px; border-radius: 0 0 0 3px; background: linear-gradient(#fff, #e6ebf4); font-weight: bold; color: #333; }
.sheetnav { display: flex; align-items: center; gap: 11px; margin-left: auto; padding-right: 9px; }

.status { flex: none; display: flex; align-items: center; height: 26px; padding: 0 5px 0 15px; background: linear-gradient(#ededf0, #e2e6ee 45%, #d6dfeb 60%, #eef2f8); border-top: 1px solid #f8f8f8; color: #1c3f73; white-space: nowrap; }
.track { margin-left: auto; }
.pager, .views { display: flex; align-items: center; height: 22px; margin-left: 4px; border: 1px solid #a4bcdb; border-radius: 2px; background: linear-gradient(#f4f7fb, #e4eaf3); }
.pager button { width: 21px; height: 20px; justify-content: center; border-right: 1px solid #dbe2ed; }
.pager span { padding: 0 3px; border-right: 1px solid #dbe2ed; }
.pager button:last-child { border: 0; }
.views { margin-left: 2px; }
.views button { width: 21px; height: 20px; justify-content: center; }
.views .on { background: linear-gradient(#8fd0ef, #bfe6f6); }
.zoom { margin: 0 10px 0 7px; }
.slider { -webkit-appearance: none; appearance: none; width: 67px; height: 18px; margin: 0 18px 0 20px; background: none; }
.slider::-webkit-slider-runnable-track { height: 7px; background: #edf1f7; border: 1px solid #a9bbd8; border-top: 2px solid #6f8ab5; border-radius: 2px; }
.slider::-webkit-slider-thumb { -webkit-appearance: none; width: 11px; height: 14px; margin-top: -5px; background: linear-gradient(#fff, #d4d8df); border: 1px solid #8c96a8; border-radius: 2px 2px 6px 6px; }
.bar { width: 1px; height: 18px; margin: 0 6px 0 8px; background: #fff; border-left: 1px solid #cdd3dd; }
.ago + .bar { margin: 0 5px; }
.ago, .conn { display: flex; align-items: center; gap: 4px; }
.conn { margin-right: 11px; color: #2f4668; }

.arrows { position: absolute; left: 0; top: 0; pointer-events: none; }
.mark { position: absolute; border: 3px solid #f00; }
.m1 { left: 61px; top: 195px; width: 95px; height: 22px; }
.m2 { left: 61px; top: 214px; width: 202px; height: 19px; }
.m3 { left: 1012px; top: 293px; width: 228px; height: 44px; padding-left: 1px; line-height: 38px; white-space: nowrap; color: #333; }
.note { position: absolute; margin: 0; font: 21px/25px "DejaVu Sans", Verdana, sans-serif; color: #f00; text-align: center; white-space: nowrap; }
.n1 { left: 177px; top: 250px; }
.n2 { left: 775px; top: 185px; }
.n3 { left: 1039px; top: 339px; }
</style>
